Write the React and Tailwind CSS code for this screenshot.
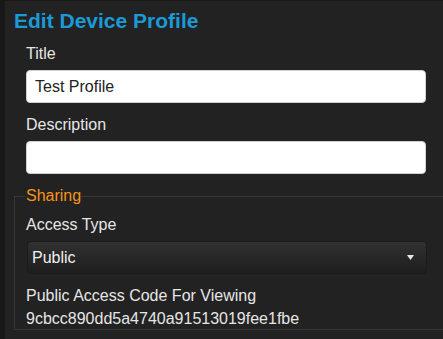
export default function App() {
  return (
    <div className="min-h-screen bg-[#181818] pt-px pl-[5px] font-['Liberation_Sans',Arial,sans-serif]">
      <div className="h-[338px] overflow-hidden bg-[#222222]">
        <h1 className="pl-[9px] pt-2 text-[21px] font-bold leading-6 text-[#1b9ad8]">
          Edit Device Profile
        </h1>

        <div className="pl-[21px] pt-[11px]">
          <label className="block text-[16px] leading-5 text-[#e6e6e6]">Title</label>
          <input
            className="mt-1.5 block h-[33px] w-[400px] rounded-[4px] border border-[#d0d0d0] bg-white px-2 text-[16px] text-[#222] outline-none"
            value="Test Profile"
            readOnly
          />

          <label className="mt-3 block text-[16px] leading-5 text-[#e6e6e6]">Description</label>
          <input
            className="mt-1.5 block h-[33px] w-[400px] rounded-[4px] border border-[#d0d0d0] bg-white px-2 text-[16px] text-[#222] outline-none"
            value=""
            readOnly
          />
        </div>

        <fieldset className="mt-3 ml-[9px] w-[460px] border border-[#363636] pl-[11px] pt-[9px]">
          <legend className="text-[16px] leading-5 text-[#f7931e]">Sharing</legend>

          <label className="block text-[16px] leading-5 text-[#e6e6e6]">Access Type</label>
          <div className="mt-1.5 ml-px flex h-[33px] w-[400px] items-center justify-between rounded-[4px] border border-[#1b1b1b] bg-linear-to-b from-[#313131] to-[#1e1e1e] pl-1 pr-3">
            <span className="text-[16px] text-[#f0f0f0]">Public</span>
            <svg width="7" height="5" viewBox="0 0 7 5">
              <path d="M0 0 H7 L3.5 5 Z" fill="#e8e8e8" />
            </svg>
          </div>

          <div className="mt-3 text-[16px] leading-5 text-[#e6e6e6]">
            Public Access Code For Viewing
          </div>
          <div className="mt-[3px] text-[16px] leading-5 text-[#e6e6e6]">
            9cbcc890dd5a4740a91513019fee1fbe
          </div>
        </fieldset>
      </div>
    </div>
  );
}
